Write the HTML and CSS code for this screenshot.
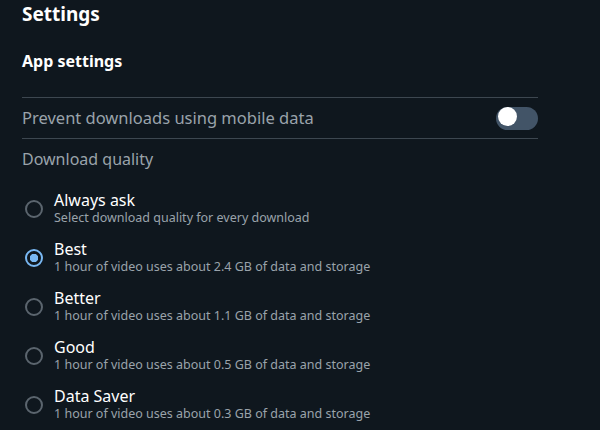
FILE: index.html
```html
<!DOCTYPE html>
<html lang="en">
<head>
    <meta charset="UTF-8">
    <title>Settings</title>
    <link rel="stylesheet" href="styles.css">
</head>
<body>
    <div class="page">
        <h1>Settings</h1>
        <h2>App settings</h2>
        <div class="row">
            <span>Prevent downloads using mobile data</span>
            <span class="toggle"><span class="knob"></span></span>
        </div>
        <div class="section">Download quality</div>
        <ul class="options">
            <li>
                <span class="radio"></span>
                <div>
                    <div class="title">Always ask</div>
                    <div class="desc">Select download quality for every download</div>
                </div>
            </li>
            <li>
                <span class="radio checked"></span>
                <div>
                    <div class="title">Best</div>
                    <div class="desc">1 hour of video uses about 2.4 GB of data and storage</div>
                </div>
            </li>
            <li>
                <span class="radio"></span>
                <div>
                    <div class="title">Better</div>
                    <div class="desc">1 hour of video uses about 1.1 GB of data and storage</div>
                </div>
            </li>
            <li>
                <span class="radio"></span>
                <div>
                    <div class="title">Good</div>
                    <div class="desc">1 hour of video uses about 0.5 GB of data and storage</div>
                </div>
            </li>
            <li>
                <span class="radio"></span>
                <div>
                    <div class="title">Data Saver</div>
                    <div class="desc">1 hour of video uses about 0.3 GB of data and storage</div>
                </div>
            </li>
        </ul>
    </div>
</body>
</html>
```

FILE: styles.css
```css
body {
    margin: 0;
    background: #0f171e;
    color: #ffffff;
    font-family: "Noto Sans", "Open Sans", sans-serif;
}
.page {
    width: 516px;
    padding: 0 22px;
    overflow: hidden;
    height: 430px;
}
h1 {
    font-size: 19px;
    font-weight: bold;
    margin: 0;
    padding-top: 1px;
    line-height: 26px;
}
h2 {
    font-size: 16px;
    font-weight: bold;
    margin: 22px 0 0;
    line-height: 24px;
}
.row {
    margin-top: 24px;
    border-top: 1px solid #3d4750;
    border-bottom: 1px solid #3d4750;
    height: 40px;
    display: flex;
    align-items: center;
    justify-content: space-between;
    color: #9aa3ab;
    font-size: 16.5px;
}
.row span:first-child {
    margin-top: -2px;
}
.toggle {
    width: 42px;
    height: 23px;
    border-radius: 12px;
    background: #425467;
    position: relative;
}
.knob {
    position: absolute;
    left: 2px;
    top: 2px;
    width: 19px;
    height: 19px;
    border-radius: 50%;
    background: #ffffff;
}
.section {
    color: #9aa3ab;
    font-size: 16px;
    margin-top: 8px;
    line-height: 24px;
}
.options {
    list-style: none;
    margin: 12px 0 0;
    padding: 0;
}
.options li {
    display: flex;
    align-items: center;
    gap: 11px;
    height: 49px;
}
.radio {
    width: 14px;
    height: 14px;
    border: 2px solid #5b656e;
    border-radius: 50%;
    margin-left: 3px;
    margin-top: 3px;
    flex: none;
    box-sizing: content-box;
}
.radio.checked {
    border-color: #79b8f3;
    background: radial-gradient(circle, #79b8f3 0 4px, transparent 4.5px);
}
.title {
    font-size: 16px;
    line-height: 20px;
}
.desc {
    font-size: 12.5px;
    color: #9aa3ab;
    line-height: 16px;
}
```
